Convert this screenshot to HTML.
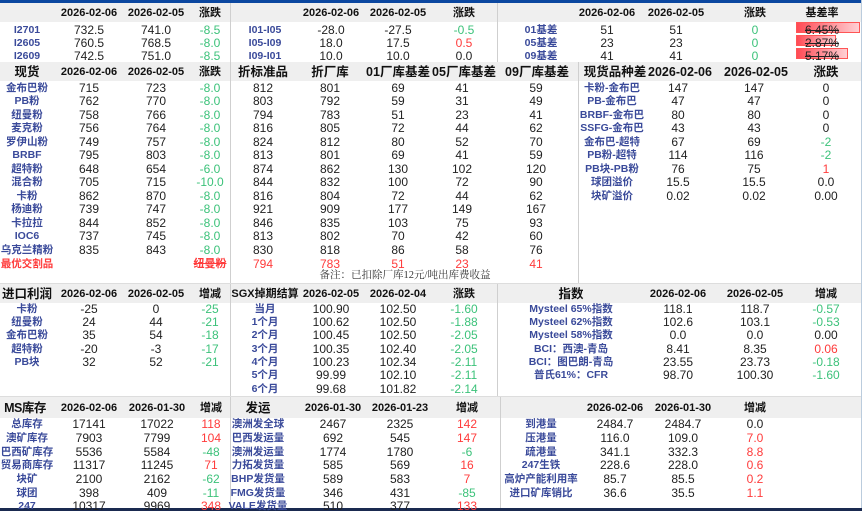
<!DOCTYPE html>
<html><head><meta charset="utf-8">
<style>
*{margin:0;padding:0;box-sizing:border-box}
body{width:865px;height:511px;background:#fff;position:relative;overflow:hidden;font-family:"Liberation Sans","Noto Sans CJK SC",sans-serif;color:#222}
.b{position:absolute;}
.r{position:absolute;left:0;width:865px;height:14px}
.r i{position:absolute;top:0;font-style:normal;line-height:14px;transform:translateX(-50%);white-space:nowrap;font-size:12px}
.r i.l{font-size:10.5px;font-weight:bold;color:#3a4a9a}
.h i{font-weight:bold;font-size:11px;color:#111}
.h i.big{font-size:12.5px}
.g{color:#3cc27a!important}.d{color:#ff3b3b!important}
.hb{position:absolute;background:#efefef}
.vl{position:absolute;width:1px;background:#cfcfcf}
.bar{position:absolute;height:11px;background:linear-gradient(90deg,#ff4a55,#ffd0d4);border:1px solid #f55}
.s{text-decoration:line-through}
</style></head><body>
<div class="b" style="left:0;top:0;width:862px;height:3px;background:#0b47a0"></div>
<div class="vl" style="left:861px;top:0;height:511px;background:#bcd"></div>
<!-- header bands -->
<div class="hb" style="left:0;top:3px;width:861px;height:19px"></div>
<div class="hb" style="left:0;top:62px;width:861px;height:19px"></div>
<div class="hb" style="left:0;top:284px;width:861px;height:19px"></div>
<div class="hb" style="left:0;top:397px;width:861px;height:21px"></div>
<div class="b" style="left:0;top:283px;width:861px;height:1px;background:#ddd"></div>
<div class="b" style="left:0;top:396px;width:861px;height:1px;background:#ddd"></div>
<div class="b" style="left:0;top:508px;width:862px;height:3px;background:#1a2a50"></div>
<!-- vertical lines -->
<div class="vl" style="left:230px;top:3px;height:280px"></div>
<div class="vl" style="left:497px;top:3px;height:59px"></div>
<div class="vl" style="left:578px;top:62px;height:221px"></div>
<div class="vl" style="left:230px;top:284px;height:112px"></div>
<div class="vl" style="left:497px;top:284px;height:112px"></div>
<div class="vl" style="left:230px;top:397px;height:111px"></div>
<div class="vl" style="left:500px;top:397px;height:111px"></div>

<!-- basis bars -->
<div class="bar" style="left:796px;top:22px;width:64px"></div>
<div class="bar" style="left:796px;top:35px;width:40px"></div>
<div class="bar" style="left:796px;top:48px;width:52px"></div>

<!-- Section 1 -->
<div class="r h" style="top:6px"><i style="left:89px">2026-02-06</i><i style="left:156px">2026-02-05</i><i style="left:210px">涨跌</i><i style="left:331px">2026-02-06</i><i style="left:398px">2026-02-05</i><i style="left:464px">涨跌</i><i style="left:607px">2026-02-06</i><i style="left:676px">2026-02-05</i><i style="left:755px">涨跌</i><i style="left:822px">基差率</i></div>
<div class="r" style="top:23px"><i class="l" style="left:27px">I2701</i><i style="left:89px">732.5</i><i style="left:156px">741.0</i><i class="g" style="left:210px">-8.5</i><i class="l" style="left:265px">I01-I05</i><i style="left:331px">-28.0</i><i style="left:398px">-27.5</i><i class="g" style="left:464px">-0.5</i><i class="l" style="left:541px">01基差</i><i style="left:607px">51</i><i style="left:676px">51</i><i class="g" style="left:755px">0</i><i class="s" style="left:822px">6.45%</i></div>
<div class="r" style="top:36px"><i class="l" style="left:27px">I2605</i><i style="left:89px">760.5</i><i style="left:156px">768.5</i><i class="g" style="left:210px">-8.0</i><i class="l" style="left:265px">I05-I09</i><i style="left:331px">18.0</i><i style="left:398px">17.5</i><i class="d" style="left:464px">0.5</i><i class="l" style="left:541px">05基差</i><i style="left:607px">23</i><i style="left:676px">23</i><i class="g" style="left:755px">0</i><i class="s" style="left:822px">2.87%</i></div>
<div class="r" style="top:49px"><i class="l" style="left:27px">I2609</i><i style="left:89px">742.5</i><i style="left:156px">751.0</i><i class="g" style="left:210px">-8.5</i><i class="l" style="left:265px">I09-I01</i><i style="left:331px">10.0</i><i style="left:398px">10.0</i><i style="left:464px">0.0</i><i class="l" style="left:541px">09基差</i><i style="left:607px">41</i><i style="left:676px">41</i><i class="g" style="left:755px">0</i><i class="s" style="left:822px">5.17%</i></div>

<!-- Section 2 -->
<div class="r h" style="top:65px"><i class="big" style="left:27px">现货</i><i style="left:89px">2026-02-06</i><i style="left:156px">2026-02-05</i><i style="left:210px">涨跌</i><i class="big" style="left:263px">折标准品</i><i class="big" style="left:330px">折厂库</i><i class="big" style="left:398px">01厂库基差</i><i class="big" style="left:464px">05厂库基差</i><i class="big" style="left:537px">09厂库基差</i><i class="big" style="left:615px">现货品种差</i><i class="big" style="left:680px">2026-02-06</i><i class="big" style="left:756px">2026-02-05</i><i class="big" style="left:826px">涨跌</i></div>

<div class="r" style="top:81px"><i class="l" style="left:27px">金布巴粉</i><i style="left:89px">715</i><i style="left:156px">723</i><i class="g" style="left:210px">-8.0</i><i style="left:263px">812</i><i style="left:330px">801</i><i style="left:398px">69</i><i style="left:462px">41</i><i style="left:536px">59</i><i class="l" style="left:612px">卡粉-金布巴</i><i style="left:678px">147</i><i style="left:754px">147</i><i style="left:826px">0</i></div>
<div class="r" style="top:94px"><i class="l" style="left:27px">PB粉</i><i style="left:89px">762</i><i style="left:156px">770</i><i class="g" style="left:210px">-8.0</i><i style="left:263px">803</i><i style="left:330px">792</i><i style="left:398px">59</i><i style="left:462px">31</i><i style="left:536px">49</i><i class="l" style="left:612px">PB-金布巴</i><i style="left:678px">47</i><i style="left:754px">47</i><i style="left:826px">0</i></div>
<div class="r" style="top:108px"><i class="l" style="left:27px">纽曼粉</i><i style="left:89px">758</i><i style="left:156px">766</i><i class="g" style="left:210px">-8.0</i><i style="left:263px">794</i><i style="left:330px">783</i><i style="left:398px">51</i><i style="left:462px">23</i><i style="left:536px">41</i><i class="l" style="left:612px">BRBF-金布巴</i><i style="left:678px">80</i><i style="left:754px">80</i><i style="left:826px">0</i></div>
<div class="r" style="top:121px"><i class="l" style="left:27px">麦克粉</i><i style="left:89px">756</i><i style="left:156px">764</i><i class="g" style="left:210px">-8.0</i><i style="left:263px">816</i><i style="left:330px">805</i><i style="left:398px">72</i><i style="left:462px">44</i><i style="left:536px">62</i><i class="l" style="left:612px">SSFG-金布巴</i><i style="left:678px">43</i><i style="left:754px">43</i><i style="left:826px">0</i></div>
<div class="r" style="top:135px"><i class="l" style="left:27px">罗伊山粉</i><i style="left:89px">749</i><i style="left:156px">757</i><i class="g" style="left:210px">-8.0</i><i style="left:263px">824</i><i style="left:330px">812</i><i style="left:398px">80</i><i style="left:462px">52</i><i style="left:536px">70</i><i class="l" style="left:612px">金布巴-超特</i><i style="left:678px">67</i><i style="left:754px">69</i><i class="g" style="left:826px">-2</i></div>
<div class="r" style="top:148px"><i class="l" style="left:27px">BRBF</i><i style="left:89px">795</i><i style="left:156px">803</i><i class="g" style="left:210px">-8.0</i><i style="left:263px">813</i><i style="left:330px">801</i><i style="left:398px">69</i><i style="left:462px">41</i><i style="left:536px">59</i><i class="l" style="left:612px">PB粉-超特</i><i style="left:678px">114</i><i style="left:754px">116</i><i class="g" style="left:826px">-2</i></div>
<div class="r" style="top:162px"><i class="l" style="left:27px">超特粉</i><i style="left:89px">648</i><i style="left:156px">654</i><i class="g" style="left:210px">-6.0</i><i style="left:263px">874</i><i style="left:330px">862</i><i style="left:398px">130</i><i style="left:462px">102</i><i style="left:536px">120</i><i class="l" style="left:612px">PB块-PB粉</i><i style="left:678px">76</i><i style="left:754px">75</i><i class="d" style="left:826px">1</i></div>
<div class="r" style="top:175px"><i class="l" style="left:27px">混合粉</i><i style="left:89px">705</i><i style="left:156px">715</i><i class="g" style="left:210px">-10.0</i><i style="left:263px">844</i><i style="left:330px">832</i><i style="left:398px">100</i><i style="left:462px">72</i><i style="left:536px">90</i><i class="l" style="left:612px">球团溢价</i><i style="left:678px">15.5</i><i style="left:754px">15.5</i><i style="left:826px">0.0</i></div>
<div class="r" style="top:189px"><i class="l" style="left:27px">卡粉</i><i style="left:89px">862</i><i style="left:156px">870</i><i class="g" style="left:210px">-8.0</i><i style="left:263px">816</i><i style="left:330px">804</i><i style="left:398px">72</i><i style="left:462px">44</i><i style="left:536px">62</i><i class="l" style="left:612px">块矿溢价</i><i style="left:678px">0.02</i><i style="left:754px">0.02</i><i style="left:826px">0.00</i></div>
<div class="r" style="top:202px"><i class="l" style="left:27px">杨迪粉</i><i style="left:89px">739</i><i style="left:156px">747</i><i class="g" style="left:210px">-8.0</i><i style="left:263px">921</i><i style="left:330px">909</i><i style="left:398px">177</i><i style="left:462px">149</i><i style="left:536px">167</i></div>
<div class="r" style="top:216px"><i class="l" style="left:27px">卡拉拉</i><i style="left:89px">844</i><i style="left:156px">852</i><i class="g" style="left:210px">-8.0</i><i style="left:263px">846</i><i style="left:330px">835</i><i style="left:398px">103</i><i style="left:462px">75</i><i style="left:536px">93</i></div>
<div class="r" style="top:229px"><i class="l" style="left:27px">IOC6</i><i style="left:89px">737</i><i style="left:156px">745</i><i class="g" style="left:210px">-8.0</i><i style="left:263px">813</i><i style="left:330px">802</i><i style="left:398px">70</i><i style="left:462px">42</i><i style="left:536px">60</i></div>
<div class="r" style="top:243px"><i class="l" style="left:27px">乌克兰精粉</i><i style="left:89px">835</i><i style="left:156px">843</i><i class="g" style="left:210px">-8.0</i><i style="left:263px">830</i><i style="left:330px">818</i><i style="left:398px">86</i><i style="left:462px">58</i><i style="left:536px">76</i></div>
<div class="r" style="top:257px"><i class="l d" style="left:27px">最优交割品</i><i class="d s" style="left:210px;font-size:11px;font-weight:bold">纽曼粉</i><i class="d" style="left:263px">794</i><i class="d" style="left:330px">783</i><i class="d" style="left:398px">51</i><i class="d" style="left:462px">23</i><i class="d" style="left:536px">41</i></div>
<div class="r" style="top:269px"><i style="left:405px;font-size:10.5px;color:#333;font-family:'Liberation Serif','Noto Serif CJK SC',serif">备注：已扣除厂库12元/吨出库费收益</i></div>

<!-- Section 3 -->
<div class="r h" style="top:287px"><i class="big" style="left:27px">进口利润</i><i style="left:89px">2026-02-06</i><i style="left:156px">2026-02-05</i><i style="left:210px">增减</i><i style="left:265px">SGX掉期结算</i><i style="left:331px">2026-02-05</i><i style="left:398px">2026-02-04</i><i style="left:464px">涨跌</i><i class="big" style="left:571px">指数</i><i style="left:678px">2026-02-06</i><i style="left:755px">2026-02-05</i><i style="left:826px">增减</i></div>
<div class="r" style="top:302px"><i class="l" style="left:27px">卡粉</i><i style="left:89px">-25</i><i style="left:156px">0</i><i class="g" style="left:210px">-25</i><i class="l" style="left:265px">当月</i><i style="left:331px">100.90</i><i style="left:398px">102.50</i><i class="g" style="left:464px">-1.60</i><i class="l" style="left:571px">Mysteel 65%指数</i><i style="left:678px">118.1</i><i style="left:755px">118.7</i><i class="g" style="left:826px">-0.57</i></div>
<div class="r" style="top:315px"><i class="l" style="left:27px">纽曼粉</i><i style="left:89px">24</i><i style="left:156px">44</i><i class="g" style="left:210px">-21</i><i class="l" style="left:265px">1个月</i><i style="left:331px">100.62</i><i style="left:398px">102.50</i><i class="g" style="left:464px">-1.88</i><i class="l" style="left:571px">Mysteel 62%指数</i><i style="left:678px">102.6</i><i style="left:755px">103.1</i><i class="g" style="left:826px">-0.53</i></div>
<div class="r" style="top:328px"><i class="l" style="left:27px">金布巴粉</i><i style="left:89px">35</i><i style="left:156px">54</i><i class="g" style="left:210px">-18</i><i class="l" style="left:265px">2个月</i><i style="left:331px">100.45</i><i style="left:398px">102.50</i><i class="g" style="left:464px">-2.05</i><i class="l" style="left:571px">Mysteel 58%指数</i><i style="left:678px">0.0</i><i style="left:755px">0.0</i><i style="left:826px">0.00</i></div>
<div class="r" style="top:342px"><i class="l" style="left:27px">超特粉</i><i style="left:89px">-20</i><i style="left:156px">-3</i><i class="g" style="left:210px">-17</i><i class="l" style="left:265px">3个月</i><i style="left:331px">100.35</i><i style="left:398px">102.40</i><i class="g" style="left:464px">-2.05</i><i class="l" style="left:571px">BCI：西澳-青岛</i><i style="left:678px">8.41</i><i style="left:755px">8.35</i><i class="d" style="left:826px">0.06</i></div>
<div class="r" style="top:355px"><i class="l" style="left:27px">PB块</i><i style="left:89px">32</i><i style="left:156px">52</i><i class="g" style="left:210px">-21</i><i class="l" style="left:265px">4个月</i><i style="left:331px">100.23</i><i style="left:398px">102.34</i><i class="g" style="left:464px">-2.11</i><i class="l" style="left:571px">BCI：图巴朗-青岛</i><i style="left:678px">23.55</i><i style="left:755px">23.73</i><i class="g" style="left:826px">-0.18</i></div>
<div class="r" style="top:368px"><i class="l" style="left:265px">5个月</i><i style="left:331px">99.99</i><i style="left:398px">102.10</i><i class="g" style="left:464px">-2.11</i><i class="l" style="left:571px">普氏61%：CFR</i><i style="left:678px">98.70</i><i style="left:755px">100.30</i><i class="g" style="left:826px">-1.60</i></div>
<div class="r" style="top:382px"><i class="l" style="left:265px">6个月</i><i style="left:331px">99.68</i><i style="left:398px">101.82</i><i class="g" style="left:464px">-2.14</i></div>

<!-- Section 4 -->
<div class="r h" style="top:401px"><i class="big" style="left:25px;letter-spacing:-0.5px">MS库存</i><i style="left:89px">2026-02-06</i><i style="left:157px">2026-01-30</i><i style="left:211px">增减</i><i class="big" style="left:258px">发运</i><i style="left:333px">2026-01-30</i><i style="left:400px">2026-01-23</i><i style="left:467px">增减</i><i style="left:615px">2026-02-06</i><i style="left:683px">2026-01-30</i><i style="left:755px">增减</i></div>
<div class="r" style="top:417px"><i class="l" style="left:27px">总库存</i><i style="left:89px">17141</i><i style="left:157px">17022</i><i class="d" style="left:211px">118</i><i class="l" style="left:258px">澳洲发全球</i><i style="left:333px">2467</i><i style="left:400px">2325</i><i class="d" style="left:467px">142</i><i class="l" style="left:541px">到港量</i><i style="left:615px">2484.7</i><i style="left:683px">2484.7</i><i style="left:755px">0.0</i></div>
<div class="r" style="top:431px"><i class="l" style="left:27px">澳矿库存</i><i style="left:89px">7903</i><i style="left:157px">7799</i><i class="d" style="left:211px">104</i><i class="l" style="left:258px">巴西发运量</i><i style="left:333px">692</i><i style="left:400px">545</i><i class="d" style="left:467px">147</i><i class="l" style="left:541px">压港量</i><i style="left:615px">116.0</i><i style="left:683px">109.0</i><i class="d" style="left:755px">7.0</i></div>
<div class="r" style="top:445px"><i class="l" style="left:27px">巴西矿库存</i><i style="left:89px">5536</i><i style="left:157px">5584</i><i class="g" style="left:211px">-48</i><i class="l" style="left:258px">澳洲发运量</i><i style="left:333px">1774</i><i style="left:400px">1780</i><i class="g" style="left:467px">-6</i><i class="l" style="left:541px">疏港量</i><i style="left:615px">341.1</i><i style="left:683px">332.3</i><i class="d" style="left:755px">8.8</i></div>
<div class="r" style="top:458px"><i class="l" style="left:27px">贸易商库存</i><i style="left:89px">11317</i><i style="left:157px">11245</i><i class="d" style="left:211px">71</i><i class="l" style="left:258px">力拓发货量</i><i style="left:333px">585</i><i style="left:400px">569</i><i class="d" style="left:467px">16</i><i class="l" style="left:541px">247生铁</i><i style="left:615px">228.6</i><i style="left:683px">228.0</i><i class="d" style="left:755px">0.6</i></div>
<div class="r" style="top:472px"><i class="l" style="left:27px">块矿</i><i style="left:89px">2100</i><i style="left:157px">2162</i><i class="g" style="left:211px">-62</i><i class="l" style="left:258px">BHP发货量</i><i style="left:333px">589</i><i style="left:400px">583</i><i class="d" style="left:467px">7</i><i class="l" style="left:541px">高炉产能利用率</i><i style="left:615px">85.7</i><i style="left:683px">85.5</i><i class="d" style="left:755px">0.2</i></div>
<div class="r" style="top:486px"><i class="l" style="left:27px">球团</i><i style="left:89px">398</i><i style="left:157px">409</i><i class="g" style="left:211px">-11</i><i class="l" style="left:258px">FMG发货量</i><i style="left:333px">346</i><i style="left:400px">431</i><i class="g" style="left:467px">-85</i><i class="l" style="left:541px">进口矿库销比</i><i style="left:615px">36.6</i><i style="left:683px">35.5</i><i class="d" style="left:755px">1.1</i></div>
<div class="r" style="top:499px"><i class="l" style="left:27px">247</i><i style="left:89px">10317</i><i style="left:157px">9969</i><i class="d" style="left:211px">348</i><i class="l" style="left:258px">VALE发货量</i><i style="left:333px">510</i><i style="left:400px">377</i><i class="d" style="left:467px">133</i></div>
</body></html>
